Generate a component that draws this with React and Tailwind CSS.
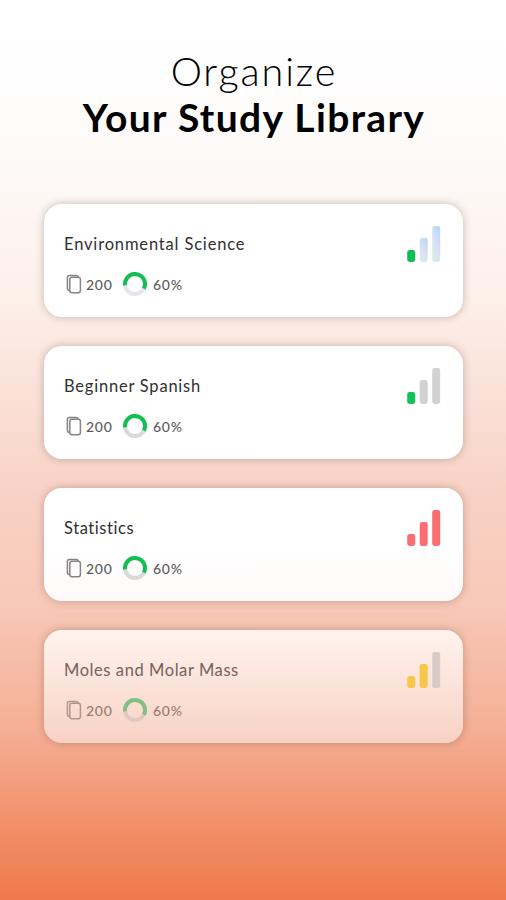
const decks = [
    { title: 'Environmental Science', tracking: 'tracking-[0.84px]', bars: ['#10bd50', 'url(#tint)', 'url(#tint)'], tinted: true, surface: 'bg-white' },
    { title: 'Beginner Spanish', tracking: 'tracking-[0.78px]', bars: ['#10c355', '#d2d2d2', '#d2d2d2'], surface: 'bg-white' },
    { title: 'Statistics', tracking: 'tracking-[0.58px]', bars: ['#fb6d70', '#fb6d70', '#fb6d70'], surface: 'bg-linear-to-b from-white from-50% to-[#fffaf9]' },
    { title: 'Moles and Molar Mass', tracking: 'tracking-[0.58px]', bars: ['#f7c748', '#f7c748', '#d9cac6'], surface: 'bg-linear-to-b from-[#fff3ef] to-[#f8d2c4]', faded: true },
];

function LevelBars({ colors }) {
    return (
        <svg width="34" height="36" viewBox="0 0 34 36" className="shrink-0">
            <defs>
                <linearGradient id="tint" x1="1" y1="0" x2="0.4" y2="1">
                    <stop offset="0" stopColor="#b3d8f5" />
                    <stop offset="0.6" stopColor="#dcdff4" />
                    <stop offset="1" stopColor="#d5eee6" />
                </linearGradient>
            </defs>
            <rect x="0.2" y="24" width="8" height="12" rx="2.4" fill={colors[0]} />
            <rect x="12.7" y="12" width="8" height="24" rx="2.4" fill={colors[1]} />
            <rect x="25.2" y="0" width="8" height="36" rx="2.4" fill={colors[2]} />
        </svg>
    );
}

function CardsIcon({ faded }) {
    return (
        <svg width="16" height="20" viewBox="0 0 16 20" fill="none" stroke={faded ? '#b1958c' : '#858585'} strokeWidth="1.5">
            <path d="M3.6 16.4 H3.2 A1.8 1.8 0 0 1 1.4 14.6 V3.2 A1.8 1.8 0 0 1 3.2 1.4 H10.4 A1.8 1.8 0 0 1 12.2 3.2" />
            <rect x="3.8" y="3.3" width="10.6" height="15.4" rx="2.2" />
        </svg>
    );
}

function ProgressRing({ tinted, faded }) {
    return (
        <svg width="24" height="24" viewBox="0 0 24 24" fill="none" strokeWidth="4">
            <circle cx="12" cy="12" r="10" stroke={tinted ? '#e6e3f0' : faded ? '#e2c8bf' : '#d9d9d9'} />
            <circle
                cx="12"
                cy="12"
                r="10"
                pathLength="100"
                strokeDasharray="60 40"
                transform="rotate(172 12 12)"
                stroke={faded ? '#7cc285' : '#14bf52'}
            />
        </svg>
    );
}

function DeckCard({ deck }) {
    return (
        <div className={`flex h-[113px] justify-between rounded-[18px] pl-5 pr-[22px] pt-[22px] shadow-[0_0_9px_rgba(70,45,35,0.3)] ${deck.surface}`}>
            <div>
                <h2 className={`pt-[6px] text-[16.5px] leading-6 ${deck.tracking} ${deck.faded ? 'text-[#77615b]' : 'text-[#303030]'}`}>
                    {deck.title}
                </h2>
                <div className={`mt-[16px] flex h-6 items-center text-[14px] font-medium tracking-[0.75px] ${deck.faded ? 'text-[#967b73]' : 'text-[#5c5c5c]'}`}>
                    <span className="ml-[2px] mr-[4px]"><CardsIcon faded={deck.faded} /></span>
                    <span className="w-[37px]">200</span>
                    <ProgressRing tinted={deck.tinted} faded={deck.faded} />
                    <span className="ml-[6px]">60%</span>
                </div>
            </div>
            <LevelBars colors={deck.bars} />
        </div>
    );
}

export default function App() {
    return (
        <div className="h-[900px] w-full overflow-hidden bg-[linear-gradient(to_bottom,#ffffff_0px,#fffefe_80px,#fdf7f4_200px,#fdefe9_300px,#fae0d7_400px,#f8d2c5_490px,#f8c9b9_600px,#f5af95_730px,#f2916b_820px,#f07a4d_898px)] pt-[47px] font-[Lato,sans-serif]">
            <h1 className="text-center text-black">
                <span className="block pl-[2px] text-[39.5px] font-light leading-[47px] tracking-[1.9px]">Organize</span>
                <span className="block pl-[2px] text-[39px] font-bold leading-[47px] tracking-[1.35px]">Your Study Library</span>
            </h1>
            <div className="ml-[44px] mt-[63px] flex w-[419px] flex-col gap-[29px]">
                {decks.map((deck) => (
                    <DeckCard key={deck.title} deck={deck} />
                ))}
            </div>
        </div>
    );
}
